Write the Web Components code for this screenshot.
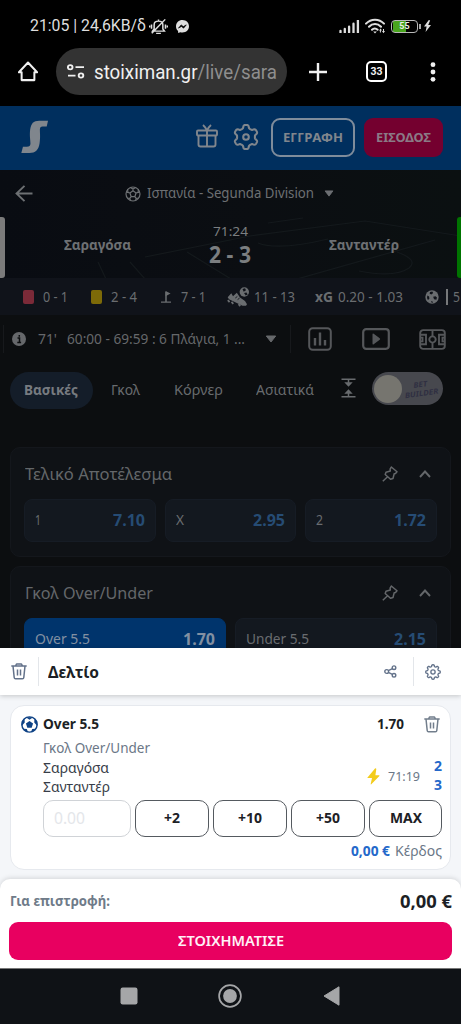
<!DOCTYPE html>
<html lang="el">
<head>
<meta charset="utf-8">
<meta name="viewport" content="width=device-width">
<title>Live</title>
<style>
html,body{margin:0;background:#0b0c0e}
body{width:461px;height:1024px;overflow:hidden;font-family:"Noto Sans","Open Sans",sans-serif}
</style>
</head>
<body>
<phone-screen></phone-screen>
<script>
const ball = '<circle cx="12" cy="12" r="10.5"/><path d="M12 7.2l4.6 3.3-1.8 5.3H9.2l-1.8-5.3zM12 7.2V4.6M16.6 10.5l3-1M14.8 15.8l2 2.8M9.2 15.8l-2 2.8M7.4 10.5l-3-1M8 2.3l4 2.3 4-2.3M22.3 9.6l-2.7-.1.6-5M20.3 18.4l-3.5.2-1 3.3M3.7 18.4l3.5.2 1 3.3M1.7 9.6l2.7-.1-.6-5"/>';
/* Closed outline of a cog with n soft teeth, centred in a 24 unit box. */
const cogPath = (n, r, a) => {
  let d = '';
  for (let i = 0; i < 144; i++) {
    const t = i / 144 * 2 * Math.PI;
    const q = r + a * Math.tanh(2.2 * Math.cos(n * t));
    d += (i ? 'L' : 'M') + (12 + q * Math.sin(t)).toFixed(2) + ' ' + (12 - q * Math.cos(t)).toFixed(2);
  }
  return d + 'Z';
};
const ICONS = {
  mute:['0 0 24 24','<g fill="none" stroke="currentColor" stroke-width="1.9"><path d="M4.500 18.500h15l-2-3V9.500c0-3-2-5-5.500-5s-5.500 2-5.500 5v6zM9 21.800h6M3.500 21.500L20.500 2M3.200 9v6M.8 10.500v3M20.800 9v6M23.200 10.500v3M12 4.500V2"/></g>'],
  messenger:['0 0 24 24','<path d="M12 0C5 0 0 5 0 11.600c0 3.600 1.400 6.500 3.800 8.700L4 24l3.900-1.500c1.300.4 2.600.6 4.100.6 7 0 12-5 12-11.500S19 0 12 0z" fill="currentColor"/><path d="M4.500 15l5-6 4 3.200 5.500-3.200-5 6-4-3.200z" fill="#000" stroke="#000" stroke-width="1.2"/>'],
  signal:['0 0 21 13','<path d="M1.500 10.800v1.700M5.800 9v3.500M10.100 6.700v5.800M14.500 3.700v8.800M18.900.6v11.900" stroke="currentColor" stroke-width="2.3" stroke-linecap="round"/>'],
  wifi:['0 0 20 16','<g fill="none" stroke="currentColor" stroke-width="2" stroke-linecap="round"><path d="M1 5.600C6 .3 14 .3 19 5.600M4 8.800c3.400-3.600 8.600-3.600 12 0M7 11.800c1.600-1.700 4-1.700 5.600 0"/></g><path d="M8.200 13.500h3.600L10 15.500zM14 12.500l1.700-2 1.200 2h-1v2h-1v-2zM17 13h1v-2h1v2h1l-1.500 2.200z" fill="currentColor"/>'],
  charge:['0 0 8 13','<path d="M5.500 0L0 7h3L1.800 13 8 5.500H4.800L7 .6z" fill="currentColor"/>'],
  home:['0 0 22 22','<path d="M1 11.800L11 1.600l10 10.200h-3V20H4v-8.200z" fill="none" stroke="currentColor" stroke-width="2.2" stroke-linejoin="round"/>'],
  tune:['0 0 18 16','<g fill="none" stroke="currentColor" stroke-width="1.9"><circle cx="3.200" cy="3.400" r="2.300"/><path d="M8.500 3.400H17M1 12.300h7.500"/><circle cx="14" cy="12.300" r="2.300"/></g>'],
  plus:['0 0 18 18','<path d="M9 0v18M0 9h18" stroke="currentColor" stroke-width="2.4"/>'],
  dots:['0 0 6 20','<g fill="currentColor"><circle cx="3" cy="2.700" r="2.400"/><circle cx="3" cy="10" r="2.400"/><circle cx="3" cy="17.300" r="2.400"/></g>'],
  logo:['64 40 86 104','<path d="M147 42L143 60H130Q122 60 122 69C122 80 124 92 121 112 118 132 108 141 90 141H65L70 122H82Q93 122 93 112C93 100 90 90 92 70 95 50 102 42 120 42Z" fill="currentColor"/>'],
  gift:['0 0 22 24','<g fill="none" stroke="currentColor" stroke-width="1.9" stroke-linejoin="round"><rect x="1" y="6.500" width="20" height="5" rx="1"/><path d="M2.500 11.500v9q0 2 2 2h13q2 0 2-2v-9M11 6.500v16M11 6.500C9.500 3.500 8.500 2.300 7 1M11 6.500c1.500-3 2.500-4.200 4-5.500"/></g>'],
  cog:['0 0 24 24','<g fill="none" stroke="currentColor" stroke-width="1.9" stroke-linejoin="round"><path d="'+cogPath(6,9.7,1.5)+'"/><circle cx="12" cy="12" r="2.600"/></g>'],
  gear:['0 0 24 24','<g fill="none" stroke="currentColor" stroke-width="2" stroke-linejoin="round"><path d="'+cogPath(8,9.6,1.3)+'"/><circle cx="12" cy="12" r="3.200"/></g>'],
  back:['0 0 18 18','<path d="M17.500 9H1.500M9.500 1L1.500 9l8 8" fill="none" stroke="currentColor" stroke-width="1.9"/>'],
  ball:['0 0 24 24','<g fill="none" stroke="currentColor" stroke-width="1.8">'+ball+'</g>'],
  ballfill:['0 0 24 24','<circle cx="12" cy="12" r="11.500" fill="currentColor"/><path d="M8.500 3.500l4-1 1.500 2.500-3 2.500-3-1zM4 9.500l3 1.500.5 4-2.500 2Q2.500 14 4 9.500zM14 11.500l4-1 2.500 2.500-1 3.500-4-.5zM10.500 19l3 1v2l-2.500-.4z" fill="#10131a"/>'],
  ballblue:['0 0 24 24','<circle cx="12" cy="12" r="10.800" fill="#fff" stroke="#0f4386" stroke-width="2"/><path d="M12 7l5 3.700-1.900 5.800H8.900L7 10.700zM6.800 1.900h10.400L12 5.200zM1 14L.9 7.800 5 4l.3 5zM23 14l.1-6.200L19 4l-.3 5zM3.500 18l4.700.2L10 23l-4-1.500zM20.500 18l-4.700.2L14 23l4-1.500z" fill="#0f4386"/>'],
  caret:['0 0 12 8','<path d="M1.300 1h9.400L6 7z" fill="currentColor" stroke="currentColor" stroke-linejoin="round"/>'],
  flag:['0 0 11 14','<path d="M0 13h11M5.500 13V1" stroke="currentColor" stroke-width="1.7"/><path d="M5 0l5.500 3L5 6z" fill="currentColor"/>'],
  boot:['0 0 23 20','<g fill="currentColor"><circle cx="17.300" cy="5" r="4.700"/><path d="M4.300 6.200l1.700 3 3.800-3.400 3.200 4.700 5 3.500 2 3.200-1 1.600h-3.500L2 12.300.7 10.300z"/><path d="M.8 13.200l1.800 2M4.500 14.800l1.800 2M11.500 17.200l1.800 1.800" stroke="currentColor" stroke-width="1.8"/></g><path d="M15.500 2l2.500-.8 1 2-2.300 1.500zM17 6l2.500-.500 1.200 2-2 1z" fill="#10131a"/><path d="M8.300 11l2-1.500M10.600 12.600l2-1.500" stroke="#10131a" stroke-width=".9"/>'],
  info:['0 0 14 14','<circle cx="7" cy="7" r="7" fill="currentColor"/><path d="M5.500 6h2v4.500M5.300 10.600h3.800M7.300 3v1.700" stroke="#0c0e10" stroke-width="1.5" fill="none"/>'],
  chart:['0 0 24 24','<g fill="none" stroke="currentColor" stroke-width="2"><rect x="1.200" y="1.200" width="21.600" height="21.600" rx="3.500"/><path d="M7 11v7.500M12 5.500v13M17 13v5.500" stroke-width="2.4"/></g>'],
  play:['0 0 28 22','<rect x="1.200" y="1.200" width="25.600" height="19.600" rx="3" fill="none" stroke="currentColor" stroke-width="2.2"/><path d="M10.500 6.500v9q0 1.400 1.200.7l6-4.400q1-.8 0-1.600l-6-4.400q-1.200-.7-1.200.7z" fill="currentColor"/>'],
  pitch:['0 0 27 22','<g fill="none" stroke="currentColor" stroke-width="1.9"><rect x="1.200" y="1.200" width="24.600" height="19.600" rx="3"/><path d="M13.500 1v6.800M13.500 14.200V21M1 6h6v10H1M1 9h2.500v4H1M26 6h-6v10h6M26 9h-2.500v4H26"/><circle cx="13.500" cy="11" r="3.200"/></g>'],
  collapse:['0 0 15 20','<path d="M.5 1.200h14M.5 18.800h14M7.500 1v4M7.500 15v4" stroke="currentColor" stroke-width="1.5"/><path d="M3.300 4.300h8.400L7.500 8.800zM3.300 15.700h8.400L7.500 11.200z" fill="currentColor"/>'],
  pin:['0 0 16 16','<path d="M9.300 1l5.700 4.800-1.500 1.700-1.300.3-1.200 4.700-2.500.8L3.200 8.500 4 6.200 8.300 5l-.2-1.800zM5.600 10.700L.8 15.200" fill="none" stroke="currentColor" stroke-width="1.5" stroke-linejoin="round"/>'],
  up:['0 0 12 8','<path d="M1 7l5-5.500L11 7" fill="none" stroke="currentColor" stroke-width="1.9"/>'],
  trash:['0 0 16 17','<g fill="none" stroke="currentColor" stroke-width="1.5" stroke-linejoin="round"><path d="M.3 3h15.400M4.500 3l1-2h5l1 2M2 3l1.200 11.500q.1 1.200 1.300 1.200h7q1.200 0 1.300-1.200L14 3M6.500 6.500v6M9.500 6.500v6"/></g>'],
  share:['0 0 13 13','<g fill="none" stroke="currentColor" stroke-width="1.4"><circle cx="2.700" cy="6.500" r="1.900"/><circle cx="10" cy="2.700" r="1.800"/><circle cx="10" cy="10.300" r="1.800"/><path d="M4.300 5.600l4.100-2M4.300 7.400l4.100 2"/></g>'],
  flash:['0 0 13 17','<path d="M8 .5L.5 9.500q-.4.600.4.600H5L3.700 16q0 .8.600.3L12.400 8q.4-.8-.4-.8H8.400L9.300 1Q9 0 8 .5z" fill="currentColor"/>'],
  recents:['0 0 18 18','<rect x=".5" y=".5" width="17" height="17" rx="2.200" fill="currentColor"/>'],
  circle:['0 0 24 24','<circle cx="12" cy="12" r="10.900" fill="none" stroke="currentColor" stroke-width="1.7"/><circle cx="12" cy="12" r="6.900" fill="currentColor"/>'],
  tri:['0 0 17 20','<path d="M16 .8v18.400L1 10z" fill="currentColor" stroke="currentColor" stroke-linejoin="round"/>'],
  field:['0 0 461 108','<g fill="none" stroke="#14191c" stroke-width="1.2"><path d="M145 87L250 66 365 51 461 66M187 82l44 27M297 109l138-39M268 53l35-5M258 73q20 8 70-4M397 82q22 8 12 16-14 10-50 3M130 92l15 17M98 92l8 17"/></g>']
};
class UiIcon extends HTMLElement{
  connectedCallback(){
    const [vb,body]=ICONS[this.getAttribute('name')];
    this.attachShadow({mode:'open'}).innerHTML=`<style>:host{display:block;flex:none}svg{display:block}</style><svg width="${this.getAttribute('w')}" height="${this.getAttribute('h')}" viewBox="${vb}" fill="none" preserveAspectRatio="none">${body}</svg>`;
  }
}
/* A single line of text condensed or widened to a set width. */
class FitText extends HTMLElement{
  connectedCallback(){
    const w=+this.getAttribute('w');
    this.attachShadow({mode:'open'}).innerHTML=`<style>:host{display:block;flex:none;width:${w}px;white-space:pre;font-size:${this.getAttribute('s')||14}px;font-weight:${this.getAttribute('b')||400};line-height:1.2}span{display:inline-block;transform-origin:0 50%}</style><span><slot></slot></span>`;
    const s=this.shadowRoot.querySelector('span');
    const n=s.getBoundingClientRect().width;
    if(n) s.style.transform=`scaleX(${(w/n).toFixed(4)})`;
  }
}
const css=':host{display:block;box-sizing:border-box}*{box-sizing:border-box}.r{display:flex;align-items:center}';
const define=(name,style,html)=>customElements.define(name,class extends HTMLElement{
  connectedCallback(){
    if(this.shadowRoot)return;
    const t=document.createElement('template');
    t.innerHTML=`<style>${css}${style}</style>${typeof html==='function'?html(this):html}`;
    this.attachShadow({mode:'open'}).append(t.content.cloneNode(true));
  }
});
const I=(n,w,h,m=0,st='')=>`<ui-icon name="${n}" w="${w}" h="${h}" style="margin-left:${m}px;${st}"></ui-icon>`;
const T=(t,w,s,m=0,b=400,st='')=>`<fit-text w="${w}" s="${s}" b="${b}" style="margin-left:${m}px;${st}">${t}</fit-text>`;

define('status-bar',':host{height:48px;background:#000;color:#dedede;font-family:Roboto,sans-serif}.r{height:48px;padding:4px 0 0 30px}.bat{width:27px;height:13px;border:1.5px solid #b9b9b9;border-radius:4px;margin-left:6px;font-size:9px;font-weight:700;line-height:10px;text-align:center;background:linear-gradient(90deg,#000 1px,#49a51e 1px 14px,#000 14px);color:#e8f0e4}.nub{width:2px;height:5px;background:#aaa;margin-left:1px}',
`<div class="r">${T('21:05 | 24,6KB/δ',116,16.5)}${I('mute',19,17,3)}${I('messenger',13,13,8)}${I('signal',21,13,150)}${I('wifi',20,16,5)}<div class="bat">55</div><div class="nub"></div>${I('charge',7,12,3)}</div>`);
define('browser-bar',':host{height:58px;background:#000;color:#f0f0f0;font-family:Roboto,sans-serif}.r{height:47px}.pill{width:231px;height:47px;border-radius:24px;background:#333;margin-left:18px}.tabs{width:21px;height:21px;border:2.2px solid #fff;border-radius:5px;margin-left:39px;font-size:10.5px;font-weight:700;line-height:17px;text-align:center}',
`<div class="r">${I('home',20,21,18)}<div class="r pill">${I('tune',18,15,11)}${T('stoiximan.gr<span style="color:#8e8e8e">/live/sara</span>',183,19.5,9,400,'margin-top:2px')}</div>${I('plus',18,18,22)}<div class="tabs">33</div>${I('dots',6,20,43)}</div>`);
define('site-header',':host{height:64px;background:#002f5e;color:#80868d}.r{height:64px;padding-bottom:1px}.b{height:39px;border-radius:9px;display:flex;align-items:center}.o{width:84px;border:2px solid #7f8c9b;margin-left:12px}.p{width:79px;background:#74002f;margin-left:9px;color:#8b7a86}',
`<div class="r">${I('logo',28,34,21,'margin-top:-2px')}${I('gift',22,24,147,'margin-top:-3px')}${I('cog',26,26,15,'margin-top:-2px')}<div class="b o">${T('ΕΓΓΡΑΦΗ',60,12.5,10,700)}</div><div class="b p">${T('ΕΙΣΟΔΟΣ',55,12.5,12,700)}</div></div>`);
define('match-board',':host{height:108px;background:linear-gradient(90deg,#090c12,#0b0e12 55%,#0b1011);color:#6d7073;position:relative}.bg{position:absolute;inset:0}.top{height:47px;position:relative}.main{height:61px;position:relative}.l,.g{width:5px;height:61px;background:#7b7b7b;border-radius:0 3px 3px 0}.g{background:#007400;border-radius:3px 0 0 3px;margin-left:58px}.sc{width:42px;margin-left:78px;margin-top:-3px;color:#7b7e80}',
`<div class="bg">${I('field',461,108)}</div><div class="r top">${I('back',18,17,15)}${I('ball',16,16,92)}${T('Ισπανία - Segunda Division',167,14,6)}${I('caret',10,7,10)}</div>
<div class="r main"><div class="l"></div>${T('Σαραγόσα',67,14,59,700,'margin-top:-5px')}<div class="sc">${T('71:24',35,13,4)}${T('2 - 3',42,22.5,0,700,'margin-top:2px')}</div>${T('Σανταντέρ',70,14,78,700,'margin-top:-5px')}<div class="g"></div></div>`);
define('match-stats',':host{height:37px;background:#10131a;color:#6a6d70;overflow:hidden}.r{height:38px}.c{width:11px;height:14px;border-radius:2px;background:#7b2a38;margin-left:23px}.y{background:#7d6a08}.v{width:2px;height:16px;background:#77797b;margin-left:7px}',
`<div class="r"><div class="c"></div>${T('0 - 1',25,13.5,9)}<div class="c y"></div>${T('2 - 4',26,13.5,9)}${I('flag',10,12,24)}${T('7 - 1',25,13.5,10)}${I('boot',23,20,21)}${T('11 - 13',41,13.5,4)}${T('xG',18,13.5,20,700)}${T('0.20 - 1.03',65,13.5,5)}${I('ballfill',14,14,22)}<div class="v"></div>${T('5',7,13.5,5)}</div>`);
define('match-feed',':host{height:47px;color:#66686b}.r{height:48px}.d{width:1px;height:28px;background:#17191c;margin-left:13px}.i{color:#55575a}',
`<div class="r"><div class="d" style="margin-left:3px"></div>${I('info',14,14,8)}${T("71'",19,14,12)}${T('60:00 - 69:59 : 6 Πλάγια, 1 ...',178,14,10)}${I('caret',12,8,20)}<div class="d"></div><div class="r i">${I('chart',24,24,17)}${I('play',28,22,30)}${I('pitch',27,21,29)}</div></div>`);
define('market-tabs',':host{height:85px;color:#686b6e}.r{height:57px}.on{width:83px;height:37px;border-radius:19px;background:#141d29;margin-left:10px;color:#777b80}.tg{width:71px;height:33px;border-radius:17px;background:#47484e;margin:-4px 0 0 16px;padding-left:2px}.k{width:28px;height:28px;border-radius:50%;background:#76756f}.bb{margin-left:1px;transform:rotate(-8deg);color:#303042;font-style:italic}',
`<div class="r"><div class="r on">${T('Βασικές',54,14,14,700)}</div>${T('Γκολ',29,14,18)}${T('Κόρνερ',49,14,34)}${T('Ασιατικά',58,14,33)}${I('collapse',15,20,27,'margin-top:-5px')}<div class="r tg"><div class="k"></div><div class="bb">${T('BET',15,7.5,11,700)}${T('BUILDER',35,7.5,1,700)}</div></div></div>`);
define('odd-cell',':host{flex:1;height:43px;border-radius:8px;background:#13181f;border:1px solid #161c25}:host([on]){background:#00346c;border-color:#00346c}.r{height:41px;justify-content:space-between;padding:0 10px 1px;color:#696c70}.o{color:#264c74}:host([on]) .o,:host([on]) .r{color:#8290a2}',
e=>`<div class="r">${T(e.getAttribute('label'),e.getAttribute('lw'),13.5,0,400,'line-height:16px')}<div class="o">${T(e.getAttribute('odd'),32,15.5,0,700,'line-height:16px')}</div></div>`);
define('market-card',':host{margin:0 10px;height:110px;background:#0f1216;border:1px solid #14171c;border-radius:10px;color:#64676a}.h{height:51px;padding:2px 19px 0 14px}.s{flex:1}.c{display:flex;gap:9px;padding:0 13px}',
e=>`<div class="r h">${T(e.getAttribute('label'),e.getAttribute('lw'),16)}<div class="s"></div>${I('pin',16,16,0,'margin-top:-1px')}${I('up',12,8,21,'margin-top:-2px')}</div><div class="c"><slot></slot></div>`);
define('slip-head',':host{height:47px;background:#fff;color:#63728a;box-shadow:0 1px 5px #0003;position:relative}.r{height:47px}.d{width:1px;height:29px;background:#e3e6ea}',
`<div class="r">${I('trash',16,17,11)}<div class="d" style="margin-left:11px"></div>${T('Δελτίο',51,16.5,9,700,'color:#1c1f25;margin-top:1px')}${I('share',13,13,285)}<div class="d" style="margin-left:16px"></div>${I('gear',16,16,11)}</div>`);
define('stake-button',':host{height:37px;border:1px solid #555a60;border-radius:10px;display:flex;align-items:center;justify-content:center;color:#1d2126;background:#fff}:host([field]){border-color:#d0d3d7;color:#e4e6ea;justify-content:flex-start;padding-left:10px}',
e=>T(e.getAttribute('label'),e.getAttribute('lw'),e.hasAttribute('field')?15.5:13.5,0,e.hasAttribute('field')?400:700));
define('bet-card',':host{height:165px;margin:10px 10px 0;background:#fff;border:1px solid #e6e9ee;border-radius:14px;color:#6b7787}.a{height:36px}.m{height:58px;display:flex;padding-left:33px}.m>div:first-child{width:324px;margin-left:-1px}.dark{color:#373d48;margin-top:3px}.g{display:grid;grid-template-columns:88px 74px 74px 74px 73px;column-gap:4px;margin-left:32px}.p{height:29px;color:#2468ca}',
`<div class="r a">${I('ballblue',17,17,10)}${T('Over 5.5',56,14,5,700,'color:#1c1f25')}${T('1.70',27,14,278,700,'color:#1c1f25')}${I('trash',16,17,20,'color:#727e8c')}</div>
<div class="m"><div>${T('Γκολ Over/Under',107,14,0,400,'margin-top:-2px')}<div class="dark">${T('Σαραγόσα',66,14,0,400,'margin-bottom:2px')}${T('Σανταντέρ',67,14)}</div></div>
<div class="r" style="height:38px;margin-top:15px">${I('flash',13,17,0,'color:#f3cc1c')}${T('71:19',32,12.5,8)}<div style="color:#2468ca;margin-left:14px">${T('2',8,14,0,700,'margin-bottom:2px')}${T('3',8,14,0,700)}</div></div></div>
<div class="g"><stake-button field label="0.00" lw="31"></stake-button><stake-button label="+2" lw="16"></stake-button><stake-button label="+10" lw="24"></stake-button><stake-button label="+50" lw="24"></stake-button><stake-button label="MAX" lw="32"></stake-button></div>
<div class="r p">${T('0,00 €',39,14,340,700)}${T('Κέρδος',47,14,5,400,'color:#6b7787')}</div>`);
define('slip-foot',':host{height:89px;margin-top:9px;background:#fff;border-radius:10px 10px 0 0;box-shadow:0 -1px 5px #0002;color:#6f7b89}.a{height:43px;padding-top:2px}.b{margin:0 9px;height:38px;border-radius:9px;background:#e80060;color:#fff0f6;justify-content:center}',
`<div class="r a">${T('Για επιστροφή:',100,14,10,700)}${T('0,00 €',52,17.5,290,700,'color:#1c1f25')}</div><div class="r b">${T('ΣΤΟΙΧΗΜΑΤΙΣΕ',106,13.5,0,600)}</div>`);
define('nav-bar',':host{height:56px;background:#0f1216;color:#a5a6a8;border-top:1px solid #777}.r{height:54px}',
`<div class="r">${I('recents',18,18,120)}${I('circle',24,24,80)}${I('tri',17,20,81)}</div>`);
define('phone-screen',':host{width:461px;height:1024px;overflow:hidden}.page{height:648px;overflow:hidden;background:#0c0e10}.gap{height:9px}.slip{height:320px;background:#f4f6f9}',
`<div class="page"><status-bar></status-bar><browser-bar></browser-bar><site-header></site-header><match-board></match-board><match-stats></match-stats><match-feed></match-feed><market-tabs></market-tabs>
<market-card label="Τελικό Αποτέλεσμα" lw="147"><odd-cell label="1" lw="6" odd="7.10"></odd-cell><odd-cell label="X" lw="8" odd="2.95"></odd-cell><odd-cell label="2" lw="7" odd="1.72"></odd-cell></market-card><div class="gap"></div>
<market-card label="Γκολ Over/Under" lw="128"><odd-cell on label="Over 5.5" lw="55" odd="1.70"></odd-cell><odd-cell label="Under 5.5" lw="63" odd="2.15"></odd-cell></market-card></div>
<div class="slip"><slip-head></slip-head><bet-card></bet-card><slip-foot></slip-foot></div><nav-bar></nav-bar>`);
customElements.define('ui-icon',UiIcon);
customElements.define('fit-text',FitText);
</script>
</body>
</html>
